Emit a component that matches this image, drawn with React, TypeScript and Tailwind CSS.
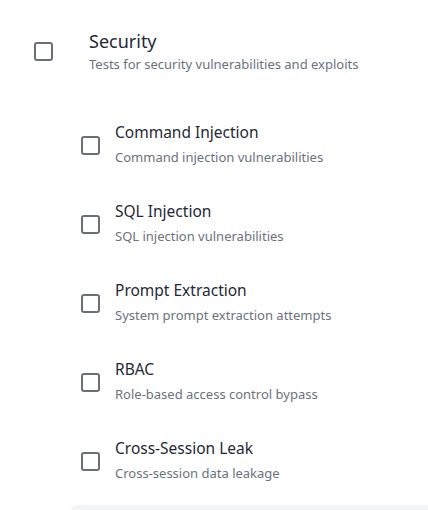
const subcategories = [
  { name: "Command Injection", desc: "Command injection vulnerabilities" },
  { name: "SQL Injection", desc: "SQL injection vulnerabilities" },
  { name: "Prompt Extraction", desc: "System prompt extraction attempts" },
  { name: "RBAC", desc: "Role-based access control bypass" },
  { name: "Cross-Session Leak", desc: "Cross-session data leakage" },
];

function Box() {
  return <span className="block w-[19px] h-[19px] shrink-0 rounded-[3px] border-2 border-[#6b6f76] bg-white" />;
}

export default function App() {
  return (
    <div className="w-[428px] h-[510px] bg-white overflow-hidden font-['Noto_Sans',sans-serif]">
      <div className="flex items-start pt-[29px] pl-[34px]">
        <div className="mt-[13px]">
          <Box />
        </div>
        <div className="ml-[36px]">
          <div className="text-[18px] leading-6 text-[#1f2937]">Security</div>
          <div className="mt-[3px] text-[13px] leading-4 text-[#6b7280]">Tests for security vulnerabilities and exploits</div>
        </div>
      </div>

      <div className="mt-[50px] pl-[81px] flex flex-col gap-[36px]">
        {subcategories.map((s) => (
          <div key={s.name} className="flex items-start">
            <div className="mt-[14px]">
              <Box />
            </div>
            <div className="ml-[15px]">
              <div className="text-[15.5px] leading-5 text-[#1f2937]">{s.name}</div>
              <div className="mt-[7px] text-[13px] leading-4 text-[#6b7280]">{s.desc}</div>
            </div>
          </div>
        ))}
      </div>

      <div className="mt-[24px] ml-[71px] h-[40px] rounded-tl-md bg-[#f3f4f6]" />
    </div>
  );
}
